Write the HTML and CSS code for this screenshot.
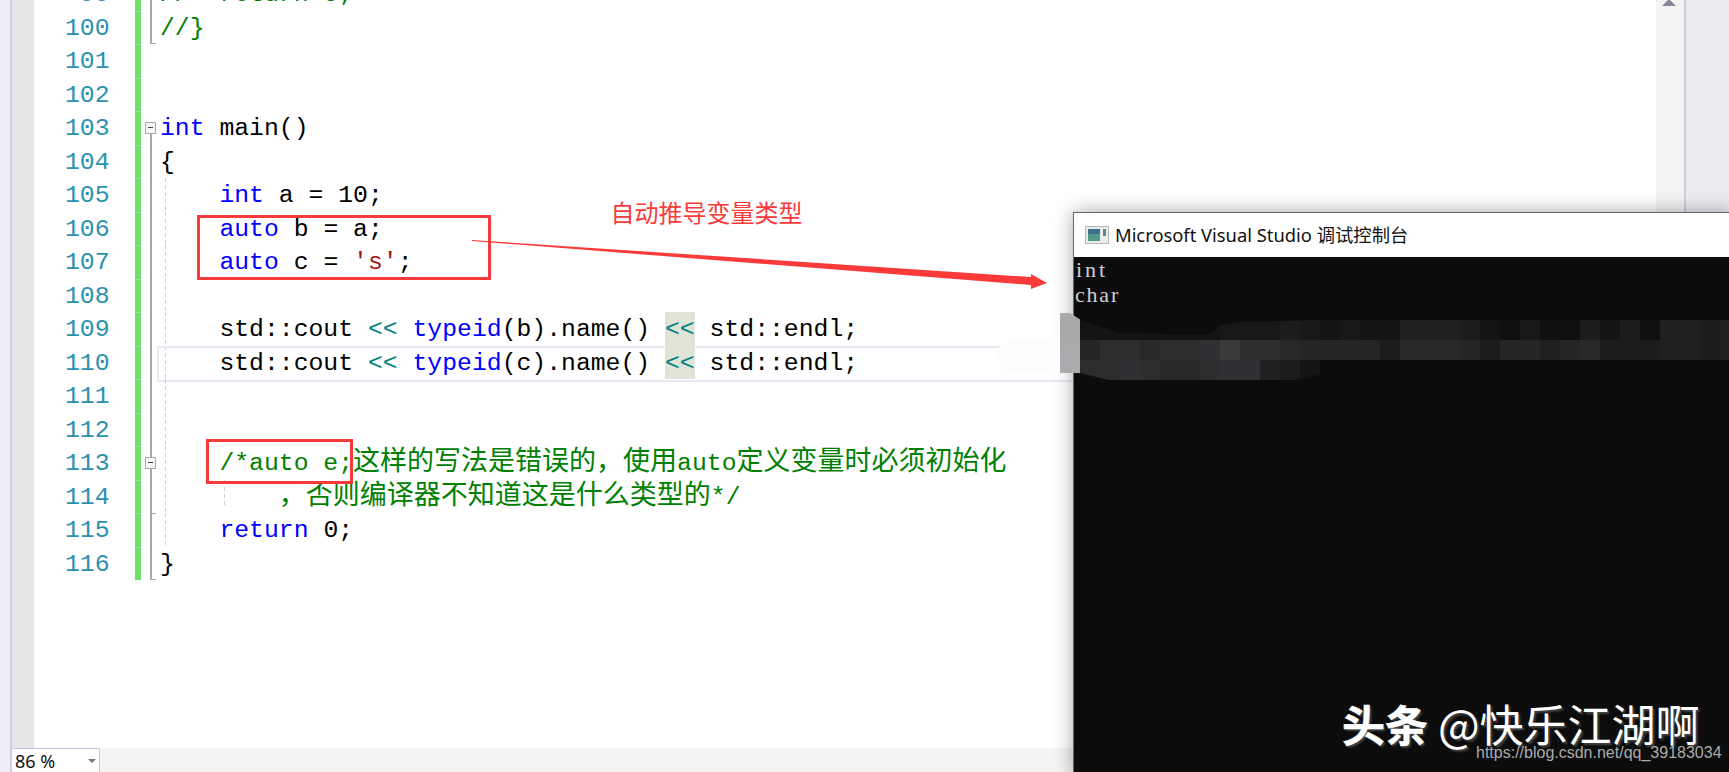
FILE: index.html
```html
<!DOCTYPE html>
<html lang="zh-CN">
<head>
<meta charset="utf-8">
<title>auto</title>
<link rel="stylesheet" href="styles.css">
</head>
<body>
<div class="page">
  <div class="strip"></div>
  <div class="workspace">
    <div class="editor">
      <div class="margin"></div>
      <div class="lines">
        <div class="row"><span class="num">99</span><span class="chg"></span><span class="fold f-line"></span><span class="code"><span class="c">//  return 0;</span></span></div>
        <div class="row"><span class="num">100</span><span class="chg"></span><span class="fold f-end"></span><span class="code"><span class="c">//}</span></span></div>
        <div class="row"><span class="num">101</span><span class="chg"></span><span class="fold"></span><span class="code"></span></div>
        <div class="row"><span class="num">102</span><span class="chg"></span><span class="fold"></span><span class="code"></span></div>
        <div class="row"><span class="num">103</span><span class="chg"></span><span class="fold f-start"><i class="box"></i></span><span class="code"><span class="k">int</span> main()</span></div>
        <div class="row"><span class="num">104</span><span class="chg"></span><span class="fold f-line"></span><span class="code">{</span></div>
        <div class="row"><span class="num">105</span><span class="chg"></span><span class="fold f-line"></span><span class="code guide">    <span class="k">int</span> a = 10;</span></div>
        <div class="row"><span class="num">106</span><span class="chg"></span><span class="fold f-line"></span><span class="code guide">    <span class="k">auto</span> b = a;</span></div>
        <div class="row"><span class="num">107</span><span class="chg"></span><span class="fold f-line"></span><span class="code guide">    <span class="k">auto</span> c = <span class="s">'s'</span>;</span></div>
        <div class="row"><span class="num">108</span><span class="chg"></span><span class="fold f-line"></span><span class="code guide"></span></div>
        <div class="row"><span class="num">109</span><span class="chg"></span><span class="fold f-line"></span><span class="code guide">    std::cout <span class="o">&lt;&lt;</span> <span class="k">typeid</span>(b).name() <span class="o hl">&lt;&lt;</span> std::endl;</span></div>
        <div class="row"><span class="num">110</span><span class="chg"></span><span class="fold f-line"></span><span class="code guide current"><span class="txt">    std::cout <span class="o">&lt;&lt;</span> <span class="k">typeid</span>(c).name() <span class="o hl">&lt;&lt;</span> std::endl;</span></span></div>
        <div class="row"><span class="num">111</span><span class="chg"></span><span class="fold f-line"></span><span class="code guide"></span></div>
        <div class="row"><span class="num">112</span><span class="chg"></span><span class="fold f-line"></span><span class="code guide"></span></div>
        <div class="row"><span class="num">113</span><span class="chg"></span><span class="fold f-line"><i class="box"></i></span><span class="code guide"><span class="c">    /*auto e;<span class="cn">这样的写法是错误的，使用</span>auto<span class="cn">定义变量时必须初始化</span></span></span></div>
        <div class="row"><span class="num">114</span><span class="chg"></span><span class="fold f-line"></span><span class="code guide guide2"><span class="c">        <span class="cn">，否则编译器不知道这是什么类型的</span>*/</span></span></div>
        <div class="row"><span class="num">115</span><span class="chg"></span><span class="fold f-tick"></span><span class="code guide">    <span class="k">return</span> 0;</span></div>
        <div class="row"><span class="num">116</span><span class="chg"></span><span class="fold f-end"></span><span class="code">}</span></div>
      </div>
      <div class="scroll">
        <div class="scroll-track"><i class="scroll-up"></i></div>
        <div class="scroll-map"></div>
      </div>
    </div>
    <div class="status">
      <div class="zoombox"><span>86 %</span><i class="caret"></i></div>
    </div>
  </div>
</div>

<div class="redbox box-auto"></div>
<div class="redbox box-err"></div>
<div class="note">自动推导变量类型</div>
<svg class="arrow" width="600" height="70" viewBox="0 0 600 70"><polygon points="0,0 559,37 559,34 575,43 559,49 559,45 0,1" fill="#fb3a3a"/></svg>

<div class="console">
  <div class="con-title">
    <svg class="con-icon" width="24" height="18" viewBox="0 0 24 18"><rect x="0.5" y="0.5" width="23" height="17" fill="#e8ecec" stroke="#b4b8b8"/><rect x="3" y="3" width="12" height="12" fill="#4f9a86"/><rect x="3" y="3" width="12" height="5" fill="#3f6f93"/><rect x="18" y="3" width="3" height="7" fill="#5f8a86"/></svg>
    <span>Microsoft Visual Studio 调试控制台</span>
  </div>
  <div class="con-body"><div class="con-int">int</div><div class="con-char">char</div></div>
</div>

<div class="smudge"></div>
<div class="grey"></div>
<div class="mosaic">
  <div class="mrow mrow1"><i class="d14"></i><i class="d14"></i><i class="d14"></i><i class="d14"></i><i class="d14"></i><i class="d14"></i><i class="d14"></i><i class="d18"></i><i class="d18"></i><i class="d18"></i><i class="d1c"></i><i class="d18"></i><i class="d14"></i><i class="d18"></i><i class="d14"></i><i class="d14"></i><i class="d20"></i><i class="d20"></i><i class="d20"></i><i class="d1c"></i><i class="d14"></i><i class="d10"></i><i class="d18"></i><i class="d10"></i><i class="d10"></i><i class="d1c"></i><i class="d14"></i><i class="d1c"></i><i class="d10"></i><i class="d20"></i><i class="d20"></i><i class="d1c"></i><i class="d20"></i></div>
  <div class="mrow"><i class="d24"></i><i class="d2c"></i><i class="d2c"></i><i class="d28"></i><i class="d2c"></i><i class="d2c"></i><i class="d30"></i><i class="d3c"></i><i class="d2c"></i><i class="d2c"></i><i class="d28"></i><i class="d24"></i><i class="d24"></i><i class="d24"></i><i class="d24"></i><i class="d1c"></i><i class="d28"></i><i class="d28"></i><i class="d28"></i><i class="d24"></i><i class="d1c"></i><i class="d24"></i><i class="d24"></i><i class="d20"></i><i class="d24"></i><i class="d28"></i><i class="d1c"></i><i class="d1c"></i><i class="d1c"></i><i class="d20"></i><i class="d20"></i><i class="d1c"></i><i class="d20"></i></div>
  <div class="mrow mrow3"><i class="d2c"></i><i class="d2c"></i><i class="d30"></i><i class="d2c"></i><i class="d28"></i><i class="d28"></i><i class="d2c"></i><i class="d30"></i><i class="d30"></i><i class="d20"></i><i class="d1c"></i><i class="d14"></i></div>
</div>

<div class="mark"><b>头条</b> <span>@快乐江湖啊</span></div>
<div class="url">https://blog.csdn.net/qq_39183034</div>
</body>
</html>
```
FILE: styles.css
```css
* { box-sizing: border-box; }
html, body { margin: 0; padding: 0; }
body {
  position: relative;
  width: 1729px;
  height: 772px;
  overflow: hidden;
  background: #fff;
  font-family: "Liberation Mono", "Noto Sans CJK SC", monospace;
}
.page { display: flex; height: 772px; }
.strip { width: 12px; background: #efedf5; border-right: 2px solid #cfcfe0; }
.workspace { flex: 1; display: flex; flex-direction: column; min-width: 0; }
.editor { flex: 1; display: flex; min-height: 0; overflow: hidden; }
.margin { width: 22px; background: #e6e7e8; }
.lines { flex: 1; margin-top: -23px; min-width: 0; }

.row { display: flex; height: 33.5px; font-size: 24.75px; line-height: 33.5px; white-space: pre; }
.num { width: 44.55px; margin-left: 31px; margin-right: 25.45px; padding-top: 1px; text-align: right; color: #2b91af; }
.chg { width: 6px; background: #6fdf6b; border-top: 1px solid #8fe88c; }
.fold { width: 19px; display: flex; align-items: center; padding-left: 4px; background-repeat: no-repeat; }
.f-line { background-image: linear-gradient(#a8a8a8, #a8a8a8); background-size: 2px 100%; background-position: 9px 0; }
.f-start { background-image: linear-gradient(#a8a8a8, #a8a8a8); background-size: 2px 50%; background-position: 9px 100%; }
.f-end {
  background-image: linear-gradient(#a8a8a8, #a8a8a8), linear-gradient(#a8a8a8, #a8a8a8);
  background-size: 2px 100%, 6px 1px;
  background-position: 9px 0, 9px 100%;
}
.f-tick {
  background-image: linear-gradient(#a8a8a8, #a8a8a8), linear-gradient(#a8a8a8, #a8a8a8);
  background-size: 2px 100%, 6px 1px;
  background-position: 9px 0, 9px 0;
}
.box { position: relative; display: block; width: 11px; height: 12px; background: #f6f6f6; border: 1px solid #a8a8a8; }
.box::before { content: ""; position: absolute; left: 2px; top: 4px; width: 5px; height: 1px; background: #444; }

.code { position: relative; flex: 1; padding-top: 1px; color: #000; min-width: 0; }
.guide {
  background-image: repeating-linear-gradient(#cfcfcf 0 4px, transparent 4px 7px);
  background-size: 1px 100%;
  background-position: 5px 0;
  background-repeat: no-repeat;
}
.guide2 {
  background-image: repeating-linear-gradient(#cfcfcf 0 4px, transparent 4px 7px), repeating-linear-gradient(#cfcfcf 0 4px, transparent 4px 7px);
  background-size: 1px 100%, 1px 26px;
  background-position: 5px 0, 64px 0;
}
.current::before {
  content: "";
  position: absolute;
  left: -3px;
  right: 0;
  top: 0;
  height: 32px;
  border: 2px solid #e9e8f3;
  border-right: 0;
}
.txt { position: relative; }
.k { color: #0000ff; }
.c { color: #008000; }
.s { color: #a31515; }
.o { color: #008080; }
.hl { display: inline-block; height: 33.5px; margin-top: -1px; padding-top: 1px; background: #dfe4d7; position: relative; vertical-align: top; }
.cn { font-family: "Noto Sans CJK SC", sans-serif; font-size: 27px; line-height: 0; }

.scroll { width: 73px; display: flex; }
.scroll-track { width: 30px; background: #f3f3f4; border-right: 2px solid #cfcfe0; display: flex; justify-content: center; padding-right: 2px; }
.scroll-up { display: block; width: 14px; height: 7px; margin-top: -1px; background: #868699; clip-path: polygon(50% 0, 100% 100%, 0 100%); }
.scroll-map { flex: 1; background: #ecebf2; }

.status { height: 24px; background: #f3f3f3; display: flex; }
.zoombox {
  width: 88px;
  background: #fff;
  border: 1px solid #c8c8dc;
  border-left: 0;
  border-bottom: 0;
  display: flex;
  align-items: center;
  justify-content: space-between;
  padding: 0 3px 0 3px;
  font: 18px/24px "Noto Sans", sans-serif;
  color: #111;
}
.caret { width: 0; height: 0; border: 4px solid transparent; border-top: 4px solid #777; margin: 4px 0 0 0; }

.redbox { position: absolute; border: 3px solid #f93a3a; }
.box-auto { left: 197px; top: 215px; width: 294px; height: 65px; }
.box-err { left: 206px; top: 439px; width: 147px; height: 45px; }
.note {
  position: absolute;
  left: 610.5px;
  top: 198px;
  font: 24px/28px "Noto Sans CJK SC", sans-serif;
  color: #f93a3a;
}
.arrow { position: absolute; left: 472px; top: 240px; }

.console {
  position: absolute;
  left: 1073px;
  top: 212px;
  right: -4px;
  bottom: -4px;
  border: 1px solid #666;
  box-shadow: 0 0 18px rgba(0, 0, 0, .35);
  display: flex;
  flex-direction: column;
}
.con-title {
  height: 44px;
  background: #fff;
  display: flex;
  align-items: center;
  gap: 6px;
  padding-left: 11px;
  font: 18.35px/24px "Noto Sans", "Noto Sans CJK SC", sans-serif;
  color: #111;
}
.con-icon { flex: none; }
.con-body {
  flex: 1;
  background: #0c0c0c;
  color: #d0d0d0;
  padding: 1px 0 0 1px;
  font: 22px/24.5px "Liberation Serif", serif;
}
.con-int { letter-spacing: 3px; padding-left: 1px; }
.con-char { letter-spacing: 1.8px; }

.smudge { position: absolute; left: 997px; top: 340px; width: 63px; height: 33px; background: #fdfdfe; border-radius: 14px 0 0 14px; }
.grey {
  position: absolute;
  left: 1060px;
  top: 313px;
  width: 20px;
  height: 60px;
  background: linear-gradient(#a9a9a9 0 45%, #a9abae 60%);
  clip-path: polygon(0 0, 50% 0, 100% 11%, 100% 100%, 0 100%);
}
.mosaic { position: absolute; left: 1080px; top: 320px; width: 660px; }
.mrow { display: flex; height: 20px; }
.mrow i { display: block; flex: none; width: 20px; height: 20px; }
.mrow1 { clip-path: polygon(0 0, 40px 13px, 130px 15px, 140px 5px, 160px 2px, 240px 0, 100% 0, 100% 100%, 0 100%); }
.mrow3 { width: 240px; clip-path: polygon(0 0, 100% 0, 100% 70%, 90% 100%, 12% 100%, 0 65%); }
.d10 { background: #101010; }
.d14 { background: #141414; }
.d18 { background: #181818; }
.d1c { background: #1c1c1c; }
.d20 { background: #202020; }
.d24 { background: #252525; }
.d28 { background: #282828; }
.d2c { background: #2c2d2d; }
.d30 { background: #2f3034; }
.d3c { background: #3a3a3a; }

.mark {
  position: absolute;
  left: 1342px;
  top: 693px;
  display: flex;
  gap: 10px;
  align-items: center;
  color: #fff;
  font-family: "Noto Sans CJK SC", sans-serif;
  font-size: 44px;
  line-height: 60px;
  white-space: nowrap;
  text-shadow: 2px 2px 2px #444;
}
.mark b { font-weight: 700; font-size: 43px; -webkit-text-stroke: .6px #fff; }
.mark span { font-weight: 400; }
.url {
  position: absolute;
  left: 1476px;
  top: 744px;
  font: 16px/18px "Liberation Sans", sans-serif;
  color: #ababab;
  white-space: nowrap;
}
```
